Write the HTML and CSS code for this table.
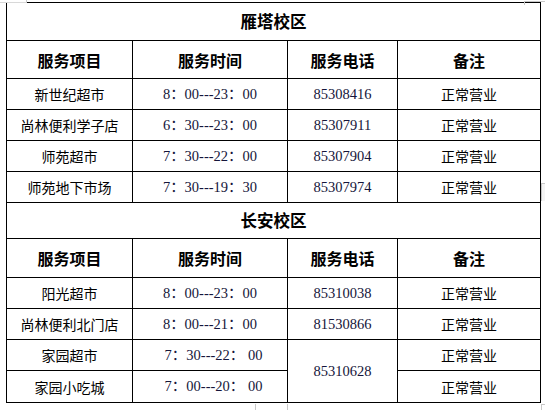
FILE: index.html
```html
<!DOCTYPE html>
<html lang="zh-CN">
<head>
<meta charset="utf-8">
<title>服务项目</title>
<link rel="stylesheet" href="styles.css">
</head>
<body>
<div class="page">
  <table class="svc">
    <colgroup>
      <col class="c1"><col class="c2"><col class="c3"><col class="c4">
    </colgroup>
    <tbody>
      <tr class="r-title"><td colspan="4" class="title">雁塔校区</td></tr>
      <tr class="r-head"><th>服务项目</th><th>服务时间</th><th>服务电话</th><th>备注</th></tr>
      <tr class="r-row"><td>新世纪超市</td><td class="num">8：00---23：00</td><td class="num">85308416</td><td>正常营业</td></tr>
      <tr class="r-row"><td>尚林便利学子店</td><td class="num">6：30---23：00</td><td class="num">85307911</td><td>正常营业</td></tr>
      <tr class="r-row"><td>师苑超市</td><td class="num">7：30---22：00</td><td class="num">85307904</td><td>正常营业</td></tr>
      <tr class="r-row"><td>师苑地下市场</td><td class="num">7：30---19：30</td><td class="num">85307974</td><td>正常营业</td></tr>
      <tr class="r-title2"><td colspan="4" class="title">长安校区</td></tr>
      <tr class="r-head2"><th>服务项目</th><th>服务时间</th><th>服务电话</th><th>备注</th></tr>
      <tr class="r-row"><td>阳光超市</td><td class="num">8：00---23：00</td><td class="num">85310038</td><td>正常营业</td></tr>
      <tr class="r-row"><td>尚林便利北门店</td><td class="num">8：00---21：00</td><td class="num">81530866</td><td>正常营业</td></tr>
      <tr class="r-row"><td>家园超市</td><td class="num shift">7：30---22： 00</td><td class="num" rowspan="2">85310628</td><td>正常营业</td></tr>
      <tr class="r-last"><td>家园小吃城</td><td class="num shift">7：00---20： 00</td><td>正常营业</td></tr>
    </tbody>
  </table>
  <div class="mark m-tl"></div>
  <div class="mark m-tr"></div>
  <div class="mark m-r"></div>
  <div class="mark m-b1"></div>
  <div class="mark m-b2"></div>
  <div class="mark m-br"></div>
</div>
</body>
</html>
```
FILE: styles.css
```css
* { box-sizing: border-box; }
html, body {
  margin: 0;
  padding: 0;
  background: #ffffff;
}
.page {
  position: relative;
  width: 545px;
  height: 410px;
  padding: 2px 0 0 6px;
  overflow: hidden;
}
.svc {
  border-collapse: separate;
  border-spacing: 0;
  table-layout: fixed;
  width: 534px;
  border-top: 1px solid #000;
  border-left: 1px solid #000;
  font-family: "Noto Sans CJK SC", "Noto Sans", sans-serif;
  color: #000;
}
.c1 { width: 126px; }
.c2 { width: 155px; }
.c3 { width: 110px; }
.c4 { width: 143px; }
.svc td, .svc th {
  border-right: 1px solid #000;
  border-bottom: 1px solid #000;
  padding: 0;
  text-align: center;
  vertical-align: middle;
  font-size: 14px;
  line-height: 1;
  font-weight: 400;
  white-space: nowrap;
}
.svc th {
  font-size: 16px;
  font-weight: 700;
}
.svc td.title {
  font-size: 16.5px;
  font-weight: 700;
}
.svc td.num {
  font-family: "Liberation Serif", "Noto Sans CJK SC", serif;
  font-size: 14.5px;
  color: #15153a;
}
.svc td.shift { padding-left: 7px; }
.r-title td { height: 38px; }
.r-head th { height: 38px; }
.r-row td { height: 31px; }
.r-title2 td { height: 36px; }
.r-head2 th { height: 39px; }
.r-last td { height: 32px; }

.mark {
  position: absolute;
  border-color: #c8c8c8;
  border-style: solid;
  border-width: 0;
}
.m-tl { left: 0; top: 0; width: 27px; height: 3px; border-bottom-width: 1px; border-right-width: 1px; border-bottom-color: #d8d8d8; }
.m-tr { left: 524px; top: 1px; width: 21px; height: 4px; border-top-width: 1px; border-left-width: 1px; }
.m-r { left: 541px; top: 183px; width: 4px; height: 18px; border-top-width: 1px; border-left-width: 1px; background: #f4f4f4; }
.m-b1 { left: 255px; top: 404px; width: 1px; height: 6px; border-left-width: 1px; }
.m-b2 { left: 287px; top: 404px; width: 1px; height: 6px; border-left-width: 1px; }
.m-br { left: 541px; top: 404px; width: 4px; height: 6px; border-top-width: 1px; border-left-width: 1px; }
```
